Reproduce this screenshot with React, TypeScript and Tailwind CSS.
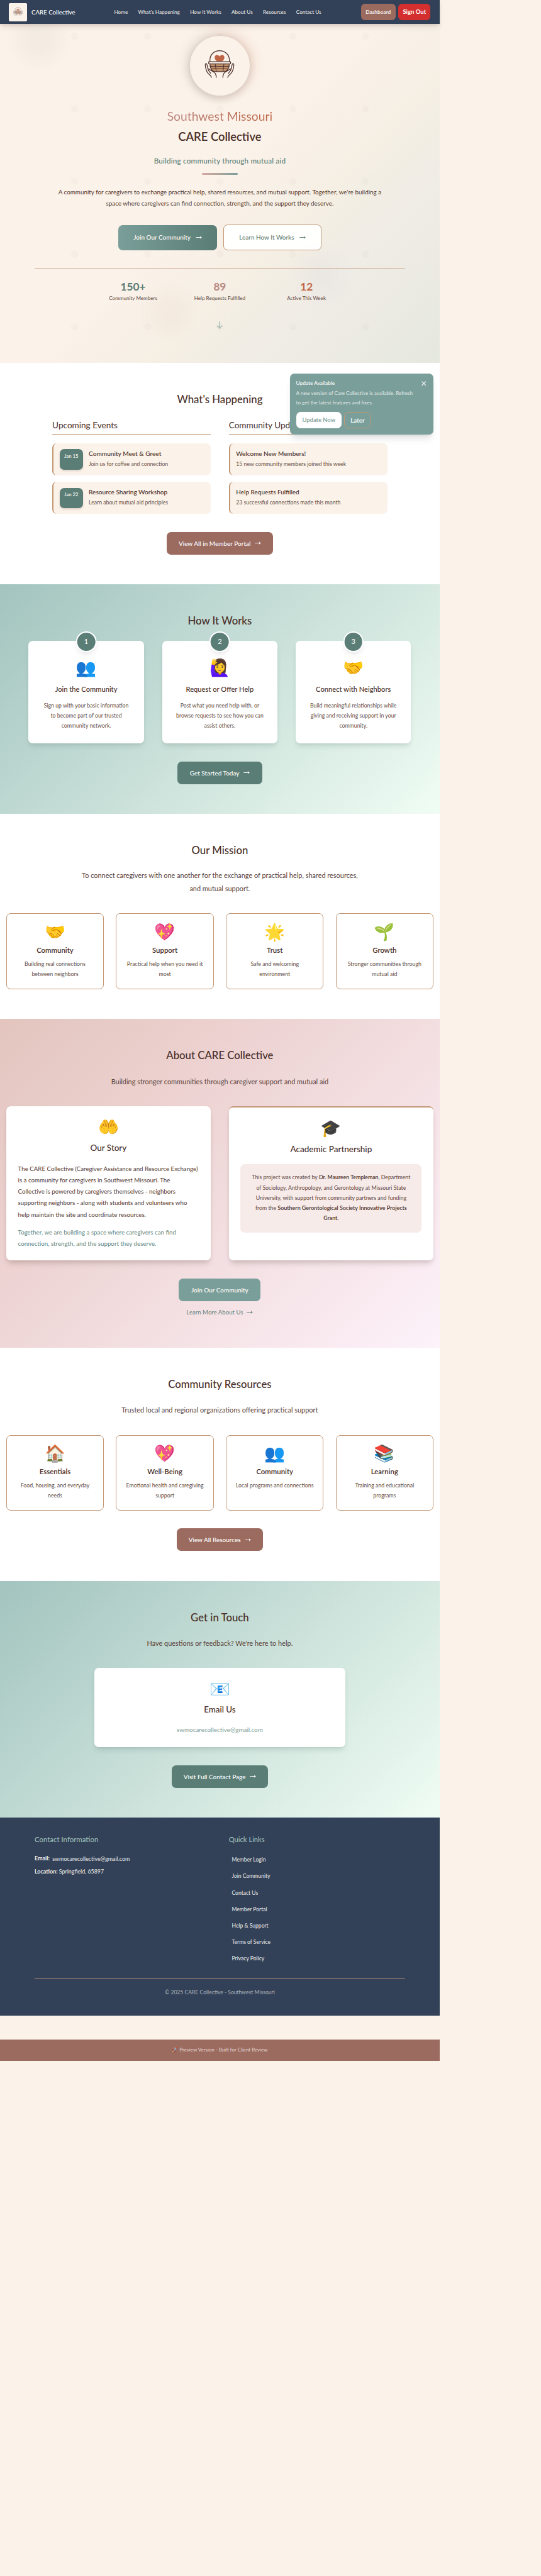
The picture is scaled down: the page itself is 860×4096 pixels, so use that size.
import type { ReactNode } from "react";

const serviceItems = [
  { icon: "🤝", title: "Community", text: ["Building real connections", "between neighbors"] },
  { icon: "💖", title: "Support", text: ["Practical help when you need it", "most"] },
  { icon: "🌟", title: "Trust", text: ["Safe and welcoming", "environment"] },
  { icon: "🌱", title: "Growth", text: ["Stronger communities through", "mutual aid"] },
];

const resourceItems = [
  { icon: "🏠", title: "Essentials", text: ["Food, housing, and everyday", "needs"] },
  { icon: "💖", title: "Well-Being", text: ["Emotional health and caregiving", "support"] },
  { icon: "👥", title: "Community", text: ["Local programs and connections"] },
  { icon: "📚", title: "Learning", text: ["Training and educational", "programs"] },
];

const steps = [
  { icon: "👥", title: "Join the Community", text: ["Sign up with your basic information", "to become part of our trusted", "community network."] },
  { icon: "🙋‍♀️", title: "Request or Offer Help", text: ["Post what you need help with, or", "browse requests to see how you can", "assist others."] },
  { icon: "🤝", title: "Connect with Neighbors", text: ["Build meaningful relationships while", "giving and receiving support in your", "community."] },
];

const events = [
  { date: "Jan 15", title: "Community Meet & Greet", text: "Join us for coffee and connection" },
  { date: "Jan 22", title: "Resource Sharing Workshop", text: "Learn about mutual aid principles" },
];

const updates = [
  { title: "Welcome New Members!", text: "15 new community members joined this week" },
  { title: "Help Requests Fulfilled", text: "23 successful connections made this month" },
];

const quickLinks = ["Member Login", "Join Community", "Contact Us", "Member Portal", "Help & Support", "Terms of Service", "Privacy Policy"];

function Lines({ lines }: { lines: string[] }) {
  return (
    <>
      {lines.map((line) => (
        <span key={line} className="block whitespace-nowrap">
          {line}
        </span>
      ))}
    </>
  );
}

function Arrow() {
  return (
    <svg viewBox="0 0 20 10" className="h-[5px] w-[10px] shrink-0" fill="none" stroke="currentColor" strokeWidth="1.8">
      <path d="M0.5 5H18" />
      <path d="M14.2 1Q15.6 4 19 5Q15.6 6 14.2 9" fill="currentColor" strokeWidth="1" />
    </svg>
  );
}

function Hand() {
  return (
    <>
      <path d="M310 318C307 306 298 302 290 294C277 281 272 262 270 237C270 227 279 227 281 236L287 263" />
      <path d="M305 292C298 283 288 274 287 262C296 263 301 269 308 274C325 284 341 289 341 318" />
    </>
  );
}

function Logo({ className }: { className: string }) {
  return (
    <svg viewBox="265 140 195 182" className={className} fill="none" stroke="#4a2f28" strokeWidth="5" strokeLinecap="round" strokeLinejoin="round">
      <path d="M345 215C334 206 330 198 331 188C333 171 352 168 362 184C372 168 391 171 393 188C394 198 390 206 379 215Z" fill="#bf6545" stroke="none" />
      <path d="M300 216V207C300 171 328 147 362 147S425 171 425 207V216" />
      <path d="M300 232H425C423 262 410 281 388 281H337C313 281 302 262 300 232Z" fill="#c4936d" />
      <path d="M302 247H423M308 263H416M334 232L341 281M390 232L384 281" strokeWidth="4" />
      <rect x="292" y="217" width="141" height="14" rx="3" />
      <Hand />
      <g transform="translate(724 0) scale(-1 1)">
        <Hand />
      </g>
    </svg>
  );
}

function Button({ className, arrow = true, children }: { className: string; arrow?: boolean; children: ReactNode }) {
  return (
    <a className={`flex h-[35.7px] shrink-0 items-center justify-center gap-[6.5px] whitespace-nowrap rounded-[7px] text-[9.97px] font-medium leading-[16px] text-white ${className}`}>
      {children}
      {arrow && <Arrow />}
    </a>
  );
}

function Heading({ children }: { children: ReactNode }) {
  return <h2 className="shrink-0 pt-[46.1px] text-[16.75px] font-medium leading-[24px]">{children}</h2>;
}

function Lead({ className, children }: { className: string; children: ReactNode }) {
  return <p className={`text-center text-[10.93px] leading-[20.2px] text-[#5c443c] ${className}`}>{children}</p>;
}

function Emoji({ children }: { children: ReactNode }) {
  return <div className="h-8 text-center text-[26.5px] leading-[32px]">{children}</div>;
}

function FeatureCards({ items, className }: { items: typeof serviceItems; className: string }) {
  return (
    <div className={`grid w-full shrink-0 grid-cols-4 gap-[19.3px] px-[9.8px] ${className}`}>
      {items.map((item) => (
        <div key={item.title} className="flex h-[120.3px] flex-col items-center rounded-[7px] border border-[#c39775] bg-white pt-[11.5px] text-center">
          <Emoji>{item.icon}</Emoji>
          <h3 className="mt-[5.2px] text-[11.4px] font-semibold leading-[18px]">{item.title}</h3>
          <p className="mt-[5px] text-[8.8px] leading-[15.7px] text-[#614a42]">
            <Lines lines={item.text} />
          </p>
        </div>
      ))}
    </div>
  );
}

function Header() {
  return (
    <header className="relative z-20 flex h-[38px] items-center bg-[#324158] pl-[14.3px] pr-[14.5px] text-white shadow-[0_6px_9px_-2px_rgba(74,47,40,0.15),0_2px_4px_rgba(74,47,40,0.08)]">
      <div className="flex h-[29px] w-[29px] items-center justify-center rounded-[2px] bg-[#fbf2e9]">
        <Logo className="mb-[2px] h-[14.5px] w-[15.5px] opacity-65" />
      </div>
      <span className="ml-[6.7px] mt-px w-[70px] whitespace-nowrap text-[9.7px] font-medium">CARE Collective</span>
      <nav className="ml-[61.5px] flex gap-[16.3px] whitespace-nowrap text-[8.2px] text-[#f3efec]">
        <a>Home</a>
        <a>What's Happening</a>
        <a>How It Works</a>
        <a>About Us</a>
        <a>Resources</a>
        <a>Contact Us</a>
      </nav>
      <div className="ml-auto flex gap-[4.5px]">
        <a className="flex h-[26px] w-[55px] items-center justify-center rounded-[6px] bg-[#9b6b60] text-[8.36px] font-medium">Dashboard</a>
        <a className="flex h-[26px] w-[51px] items-center justify-center whitespace-nowrap rounded-[6px] bg-[#d32f2f] text-[9.5px] font-bold">Sign Out</a>
      </div>
    </header>
  );
}

function Stat({ value, label, className }: { value: string; label: string; className: string }) {
  return (
    <div>
      <div className={`text-[17.24px] font-bold leading-[20px] ${className}`}>{value}</div>
      <div className="mt-[1.5px] text-[8.12px] leading-[14px] text-[#5c443c]">{label}</div>
    </div>
  );
}

function Hero() {
  return (
    <section className="relative flex h-[539px] flex-col items-center overflow-hidden bg-[linear-gradient(135deg,#fbf2e9_0%,#fbf2e9_48%,#f3eee3_68%,#f0ece6_76%,#e5e8df_100%)]">
      <div className="absolute left-[60.75px] top-[-38px] h-[577px] w-[577.5px] bg-[radial-gradient(circle_at_center,rgba(110,100,110,0.032)_5.5px,transparent_6px)] bg-[length:115.5px_115.4px] bg-[position:0_0.2px]" />
      <div className="absolute left-[10px] top-[-26px] size-[104px] rounded-full bg-[radial-gradient(circle,rgba(122,120,110,0.055)_20%,transparent_70%)]" />
      <div className="absolute left-[220px] top-[408px] size-[100px] rounded-full bg-[radial-gradient(circle,rgba(190,110,70,0.045)_20%,transparent_70%)]" />
      <div className="absolute left-[455px] top-[345px] size-[110px] rounded-full bg-[radial-gradient(circle,rgba(160,160,200,0.07)_10%,transparent_70%)]" />

      <div className="relative mt-[19.2px] flex size-[95px] shrink-0 justify-center rounded-full bg-[#fbf2e9] shadow-[0_5px_13px_rgba(74,47,40,0.18),6px_-5px_18px_rgba(205,100,70,0.15),-6px_-3px_18px_rgba(122,158,153,0.16)]">
        <Logo className="mt-[22px] h-[45px] w-[48.3px]" />
      </div>
      <h1 className="relative mt-[15.5px] flex flex-col items-center whitespace-nowrap leading-[33px]">
        <span className="bg-gradient-to-r from-[#b98680] to-[#bf6545] bg-clip-text text-[19.28px] font-normal text-transparent">Southwest Missouri</span>
        <span className="text-[18.36px] font-semibold">CARE Collective</span>
      </h1>
      <p className="relative mt-[12px] text-[11.68px] font-medium leading-[18px] tracking-[0.2px] text-[#5a7d76]">Building community through mutual aid</p>
      <div className="relative mt-[11.8px] h-[2.2px] w-[57px] shrink-0 rounded-full bg-gradient-to-r from-[#d8a8a0] to-[#7a9e99]" />
      <p className="relative mt-[19.4px] text-center text-[9.85px] leading-[17.9px] text-[#54392f]">
        <Lines lines={["A community for caregivers to exchange practical help, shared resources, and mutual support. Together, we're building a", "space where caregivers can find connection, strength, and the support they deserve."]} />
      </p>
      <div className="relative mt-[24.3px] flex h-[41.3px] shrink-0 items-center gap-[9.5px] whitespace-nowrap text-[9.98px] font-medium">
        <a className="flex h-[40px] w-[157.5px] items-center justify-center gap-[8px] rounded-[7px] bg-gradient-to-r from-[#7a9e99] to-[#5a7d76] text-white">
          Join Our Community <Arrow />
        </a>
        <a className="flex h-[41.3px] w-[156px] items-center justify-center gap-[8px] rounded-[7px] border border-[#c39775] bg-white/95 text-[#5a7d76]">
          Learn How It Works <Arrow />
        </a>
      </div>
      <div className="relative mt-[28.2px] flex w-[589px] justify-center border-t border-[#c39775] pt-[18.2px] text-center">
        <div className="grid w-[413.4px] grid-cols-3">
          <Stat value="150+" label="Community Members" className="text-[#5a7d76]" />
          <Stat value="89" label="Help Requests Fulfilled" className="text-[#b98680]" />
          <Stat value="12" label="Active This Week" className="text-[#bf6545]" />
        </div>
      </div>
      <svg viewBox="0 0 10 12" className="relative mt-[29.2px] h-[12px] w-[10px] shrink-0" fill="none" stroke="#a3b8b1" strokeWidth="1.3">
        <path d="M5 0V11.2M0.6 6.8Q4 8.4 5 11.4Q6 8.4 9.4 6.8" />
      </svg>
    </section>
  );
}

function UpdateToast() {
  return (
    <aside className="absolute left-[461.3px] top-[17px] h-[96.5px] w-[228.2px] rounded-[7px] bg-[#7a9e99] px-[9.3px] pt-[7.7px] text-white shadow-[0_9px_12px_-3px_rgba(0,0,0,0.12),0_3px_5px_-3px_rgba(0,0,0,0.1)]">
      <div className="flex items-start justify-between">
        <h4 className="text-[8.33px] font-medium leading-[14px]">Update Available</h4>
        <svg viewBox="0 0 8 8" className="mr-[3px] mt-[4.5px] size-[7.5px]" fill="none" stroke="white" strokeWidth="1.3">
          <path d="M0.6 0.6L7.4 7.4M7.4 0.6L0.6 7.4" />
        </svg>
      </div>
      <p className="mt-[2.2px] text-[8.07px] leading-[15px] text-[#e3ebe9]">
        <Lines lines={["A new version of Care Collective is available. Refresh", "to get the latest features and fixes."]} />
      </p>
      <div className="mt-[7.2px] flex gap-[4.3px] whitespace-nowrap font-semibold">
        <button className="h-[26px] w-[72.4px] rounded-[7px] bg-white text-[9.41px] text-[#7a9e99]">Update Now</button>
        <button className="h-[26px] w-[42.3px] rounded-[7px] border border-[#c39775] text-[9.8px]">Later</button>
      </div>
    </aside>
  );
}

function Happening() {
  return (
    <section className="relative flex h-[352px] flex-col items-center bg-white">
      <Heading>What's Happening</Heading>
      <div className="mt-[18.6px] grid w-[532.6px] shrink-0 grid-cols-2 gap-[28.6px]">
        <div>
          <h3 className="border-b border-[#c39775] pb-[4px] text-[13.6px] font-normal leading-[20px]">Upcoming Events</h3>
          <div className="mt-[14px] flex flex-col gap-[9.6px]">
            {events.map((event) => (
              <div key={event.date} className="flex h-[51.6px] rounded-[7px] border-l-2 border-[#c39775] bg-[#fbf2e9] pl-[9.6px]">
                <div className="mt-[9.7px] h-[32.7px] w-[37.3px] rounded-[7px] bg-[#5a7d76] pt-[3.3px] text-center text-[7.8px] font-medium leading-[14px] text-white shadow-[0_2px_3px_rgba(74,47,40,0.15)]">{event.date}</div>
                <div className="ml-[9px] pt-[8.2px]">
                  <h4 className="text-[10.13px] font-medium leading-[16px]">{event.title}</h4>
                  <p className="mt-[1.2px] text-[8.7px] leading-[15px] text-[#664f47]">{event.text}</p>
                </div>
              </div>
            ))}
          </div>
        </div>
        <div>
          <h3 className="border-b border-[#c39775] pb-[4px] text-[13.6px] font-normal leading-[20px]">Community Updates</h3>
          <div className="mt-[14px] flex flex-col gap-[9.6px]">
            {updates.map((update) => (
              <div key={update.title} className="h-[51.6px] rounded-[7px] border-l-2 border-[#c39775] bg-[#fbf2e9] pl-[9.6px] pt-[8.2px]">
                <h4 className="text-[9.97px] font-medium leading-[16px]">{update.title}</h4>
                <p className="mt-[1.2px] text-[8.71px] leading-[15px] text-[#664f47]">{update.text}</p>
              </div>
            ))}
          </div>
        </div>
      </div>
      <Button className="mt-[28.4px] w-[169px] bg-[#9b6b60]">View All in Member Portal</Button>
      <UpdateToast />
    </section>
  );
}

function HowItWorks() {
  return (
    <section className="flex h-[365.3px] flex-col items-center bg-[linear-gradient(135deg,#a3c4bf,#f0fdf4)]">
      <Heading>How It Works</Heading>
      <div className="mt-[19.7px] grid w-[608px] shrink-0 grid-cols-3 gap-[29px]">
        {steps.map((step, index) => (
          <div key={step.title} className="relative flex h-[163.4px] flex-col items-center rounded-[7px] bg-white pt-[26.2px] text-center shadow-[0_6px_9px_-2px_rgba(50,80,70,0.16),0_2px_4px_-2px_rgba(50,80,70,0.12)]">
            <div className="absolute left-1/2 top-[-14.4px] flex size-[32.6px] -translate-x-1/2 items-center justify-center rounded-full border-2 border-white bg-[#5a7d76] text-[11px] font-medium text-white shadow-[0_5px_8px_-2px_rgba(0,0,0,0.1)]">{index + 1}</div>
            <Emoji>{step.icon}</Emoji>
            <h3 className="mt-[10.2px] text-[11.17px] font-medium leading-[18px]">{step.title}</h3>
            <p className="mt-[8.4px] text-[8.73px] leading-[16.35px] text-[#614a42]">
              <Lines lines={step.text} />
            </p>
          </div>
        ))}
      </div>
      <Button className="mt-[28.9px] w-[134.4px] bg-[#5a7d76]">Get Started Today</Button>
    </section>
  );
}

function Mission() {
  return (
    <section className="flex h-[326px] flex-col items-center bg-white">
      <Heading>Our Mission</Heading>
      <Lead className="mt-[18.1px]">
        <Lines lines={["To connect caregivers with one another for the exchange of practical help, shared resources,", "and mutual support."]} />
      </Lead>
      <FeatureCards items={serviceItems} className="mt-[29.6px]" />
    </section>
  );
}

function About() {
  return (
    <section className="flex h-[522.9px] flex-col items-center bg-[linear-gradient(135deg,#e3c5be,#edd3d2_35%,#fdf2fa)]">
      <Heading>About CARE Collective</Heading>
      <Lead className="mt-[19.2px]">Building stronger communities through caregiver support and mutual aid</Lead>
      <div className="mt-[29.4px] grid w-full shrink-0 grid-cols-2 gap-[28.6px] px-[9.8px]">
        <article className="h-[245px] rounded-[7px] bg-white px-[18.8px] pt-[16.2px] shadow-[0_8px_10px_-3px_rgba(74,47,40,0.18),0_2px_5px_rgba(74,47,40,0.08)]">
          <Emoji>🤲</Emoji>
          <h3 className="mt-[7.7px] text-center text-[13.46px] font-medium leading-[20px]">Our Story</h3>
          <p className="mt-[13.9px] text-[9.73px] leading-[18.15px] text-[#54392f]">
            <Lines
              lines={[
                "The CARE Collective (Caregiver Assistance and Resource Exchange)",
                "is a community for caregivers in Southwest Missouri. The",
                "Collective is powered by caregivers themselves - neighbors",
                "supporting neighbors - along with students and volunteers who",
                "help maintain the site and coordinate resources.",
              ]}
            />
          </p>
          <p className="mt-[9.8px] text-[9.73px] leading-[18.15px] text-[#5f857d]">
            <Lines lines={["Together, we are building a space where caregivers can find", "connection, strength, and the support they deserve."]} />
          </p>
        </article>
        <article className="h-[245px] rounded-[7px] border-t-2 border-[#c39775] bg-white px-[18.8px] pt-[16px] shadow-[0_8px_10px_-3px_rgba(74,47,40,0.18),0_2px_5px_rgba(74,47,40,0.08)]">
          <Emoji>🎓</Emoji>
          <h3 className="mt-[7.7px] text-center text-[13.53px] font-medium leading-[20px]">Academic Partnership</h3>
          <div className="mt-[14.4px] h-[109px] rounded-[7px] bg-[#f7ebea] pt-[13.2px] text-center text-[8.76px] leading-[16.1px] text-[#5c443c]">
            <span className="block whitespace-nowrap">
              This project was created by <b className="font-semibold text-[#4a2f28]">Dr. Maureen Templeman</b>, Department
            </span>
            <Lines lines={["of Sociology, Anthropology, and Gerontology at Missouri State", "University, with support from community partners and funding"]} />
            <span className="block whitespace-nowrap">
              from the <b className="text-[8.95px] font-semibold text-[#4a2f28]">Southern Gerontological Society Innovative Projects</b>
            </span>
            <b className="block font-semibold text-[#4a2f28]">Grant.</b>
          </div>
        </article>
      </div>
      <Button arrow={false} className="mt-[28.9px] w-[130px] bg-[#7a9e99]">
        Join Our Community
      </Button>
      <a className="mt-[8.9px] flex items-center gap-[6px] text-[9.62px] leading-[18px] text-[#5f7f78]">
        Learn More About Us <Arrow />
      </a>
    </section>
  );
}

function Resources() {
  return (
    <section className="flex h-[370.5px] flex-col items-center bg-white">
      <Heading>Community Resources</Heading>
      <Lead className="mt-[19px]">Trusted local and regional organizations offering practical support</Lead>
      <FeatureCards items={resourceItems} className="mt-[29.2px]" />
      <Button className="mt-[28.5px] w-[137.2px] bg-[#9b6b60]">View All Resources</Button>
    </section>
  );
}

function Contact() {
  return (
    <section className="flex h-[376.5px] flex-col items-center bg-[linear-gradient(135deg,#a3c4bf,#f0fdf4)]">
      <Heading>Get in Touch</Heading>
      <Lead className="mt-[19px]">Have questions or feedback? We're here to help.</Lead>
      <div className="mt-[28.8px] flex h-[126.2px] w-[398.7px] shrink-0 flex-col items-center rounded-[7px] bg-white pt-[17.5px] shadow-[0_6px_9px_-2px_rgba(50,80,70,0.16),0_2px_4px_-2px_rgba(50,80,70,0.12)]">
        <Emoji>📧</Emoji>
        <h3 className="mt-[6.7px] text-[13.38px] font-medium leading-[20px]">Email Us</h3>
        <a className="mt-[12.6px] text-[9.89px] leading-[18px] text-[#7a9e99]">swmocarecollective@gmail.com</a>
      </div>
      <Button className="mt-[29px] w-[153.6px] bg-[#5a7d76]">Visit Full Contact Page</Button>
    </section>
  );
}

function Footer() {
  return (
    <footer className="h-[314.9px] bg-[#324158] px-[54.9px] pt-[25.4px] text-[#f0edea]">
      <div className="grid grid-cols-2 gap-[28.6px]">
        <div>
          <h3 className="text-[11.45px] leading-[18px] text-[#a3c4bf]">Contact Information</h3>
          <p className="mt-[12.4px] flex h-[18px] gap-[4.4px] text-[8.88px] leading-[18px]">
            <b className="text-[9.09px] font-semibold text-white">Email:</b>
            <span className="pt-px">swmocarecollective@gmail.com</span>
          </p>
          <p className="mt-[2.9px] text-[8.85px] leading-[18px]">
            <b className="text-[9.07px] font-semibold text-white">Location:</b> Springfield, 65897
          </p>
        </div>
        <div>
          <h3 className="text-[11.21px] leading-[18px] text-[#a3c4bf]">Quick Links</h3>
          <ul className="mt-[10.8px] pl-[4.8px] text-[8.57px] leading-[26.1px]">
            {quickLinks.map((link) => (
              <li key={link}>{link}</li>
            ))}
          </ul>
        </div>
      </div>
      <p className="mt-[18.5px] border-t border-[#c39775] pt-[13.4px] text-center text-[8.57px] leading-[16px] text-[#adb3bb]">© 2025 CARE Collective - Southwest Missouri</p>
    </footer>
  );
}

export default function App() {
  return (
    <div className="min-h-[4096px] w-[860px] overflow-hidden bg-[#fbf2e9] font-['Lato','Noto_Color_Emoji',sans-serif] text-[#4a2f28]">
      <div className="w-[698.8px]">
        <Header />
        <Hero />
        <Happening />
        <HowItWorks />
        <Mission />
        <About />
        <Resources />
        <Contact />
        <Footer />
        <div className="mt-[37.8px] flex h-[34.2px] items-center justify-center gap-[2px] bg-[#9b6b60] text-[7.93px] text-[#e6d6d1]">
          <span className="opacity-80">🚀</span>
          <span>Preview Version - Built for Client Review</span>
        </div>
      </div>
    </div>
  );
}
